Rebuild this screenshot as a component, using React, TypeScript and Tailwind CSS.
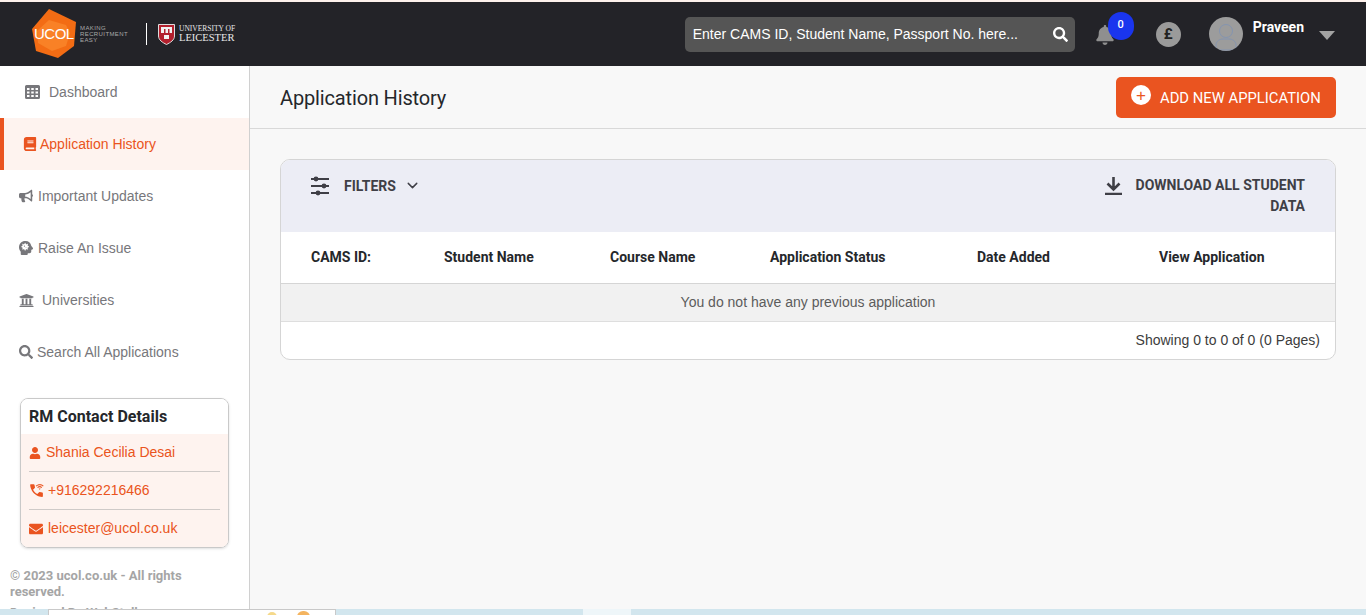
import { ChevronDown } from 'lucide-react';
import { FaBell, FaBook, FaBullhorn, FaEnvelope, FaSearch, FaUniversity, FaUser } from 'react-icons/fa';
import { FaHeadSideVirus } from 'react-icons/fa6';
import { MdWifiCalling3 } from 'react-icons/md';

const arial = "font-['Liberation_Sans',Arial,sans-serif]";
const roboto = "font-['Roboto',sans-serif]";

function Logo() {
  return (
    <div className="flex items-center">
      <div className="relative ml-[32px] h-[50px] w-[44px]">
        <svg className="absolute inset-0" width="44" height="50" viewBox="0 0 44 50">
          <polygon points="17,0 44,13 42,37 26,49 4,42 0,20" fill="#f36c14" />
          <polygon points="17,11 34,16 38,24 34,37 20,42 6,34 5,22" fill="#fb8a2e" opacity="0.7" />
        </svg>
        <span className={`${arial} absolute left-[2px] top-[16px] text-[15px] leading-[18px] tracking-[-0.5px] text-white`}>UCOL</span>
      </div>
      <div className={`${arial} ml-[4px] w-[50px] text-[6px] leading-[6px] tracking-[0.4px] text-[#a9a9a9]`}>
        <div>MAKING</div>
        <div className="whitespace-nowrap">RECRUITMENT</div>
        <div>EASY</div>
      </div>
      <div className="ml-[16px] h-[22px] w-px bg-white" />
      <svg className="ml-[11px]" width="17" height="21" viewBox="0 0 17 21">
        <path d="M0.5 0.5H16.5V12C16.5 16 12.5 18.5 8.5 20.5C4.5 18.5 0.5 16 0.5 12Z" fill="#b3202e" stroke="#ddd" strokeWidth="1" />
        <rect x="3" y="3" width="11" height="6" fill="#f2f2f2" />
        <rect x="6" y="5" width="1.5" height="4" fill="#b3202e" />
        <rect x="10" y="5" width="1.5" height="4" fill="#b3202e" />
        <rect x="6" y="11" width="5" height="4" fill="#f2f2f2" />
      </svg>
      <div className="ml-[4px] font-['Liberation_Serif',serif] text-[#e8e8e8]">
        <div className="whitespace-nowrap text-[7.5px] leading-[8px]">UNIVERSITY OF</div>
        <div className="whitespace-nowrap text-[10.5px] leading-[10px]">LEICESTER</div>
      </div>
    </div>
  );
}

function Header() {
  return (
    <header className="flex h-[64px] items-center bg-[#232328]">
      <Logo />
      <div className={`${arial} ml-auto flex h-[35px] w-[390px] items-center justify-between rounded-[5px] bg-[#555555] pl-[8px] pr-[7px] text-[14px] text-white`}>
        <span>Enter CAMS ID, Student Name, Passport No. here...</span>
        <FaSearch className="text-[15px]" />
      </div>
      <div className="relative ml-[20px] mt-[1px] h-[20px] w-[20px] text-[#8f8f8f]">
        <FaBell className="text-[20px]" />
        <span className={`${roboto} absolute left-[13px] top-[-13px] flex h-[28px] w-[26px] items-center justify-center rounded-full bg-[#1a35ee] text-[11px] font-medium text-white`}>0</span>
      </div>
      <span className={`${roboto} ml-[41px] mt-[1px] flex h-[25px] w-[25px] items-center justify-center rounded-full bg-[#9a9a9a] text-[15px] font-bold text-[#222]`}>£</span>
      <div className="ml-[28px] flex h-[34px] w-[34px] items-end justify-center overflow-hidden rounded-full bg-[#9c9c9c]">
        <svg width="26" height="30" viewBox="0 0 26 30" fill="none" stroke="#8494b0" strokeWidth="1">
          <circle cx="13" cy="10" r="6.5" />
          <path d="M3 29V24C3 20 7 18 10 18H16C19 18 23 20 23 24V29Z" />
        </svg>
      </div>
      <span className={`${roboto} ml-[10px] mb-[14px] text-[14px] font-bold text-white`}>Praveen</span>
      <span className="ml-[15px] mr-[31px] mt-[2px] h-0 w-0 border-x-[8px] border-t-[9px] border-x-transparent border-t-[#a3a3a3]" />
    </header>
  );
}

function GridIcon() {
  return (
    <svg width="15" height="14" viewBox="0 0 15 14" fill="#77777b">
      <path d="M1.5 0H13.5A1.5 1.5 0 0 1 15 1.5V12.5A1.5 1.5 0 0 1 13.5 14H1.5A1.5 1.5 0 0 1 0 12.5V1.5A1.5 1.5 0 0 1 1.5 0Z" />
      <g fill="#ffffff">
        <rect x="2" y="3" width="2.5" height="2" />
        <rect x="6.25" y="3" width="2.5" height="2" />
        <rect x="10.5" y="3" width="2.5" height="2" />
        <rect x="2" y="6.5" width="2.5" height="2" />
        <rect x="6.25" y="6.5" width="2.5" height="2" />
        <rect x="10.5" y="6.5" width="2.5" height="2" />
        <rect x="2" y="10" width="2.5" height="2" />
        <rect x="6.25" y="10" width="2.5" height="2" />
        <rect x="10.5" y="10" width="2.5" height="2" />
      </g>
    </svg>
  );
}

const navItems = [
  { label: 'Dashboard', icon: <GridIcon />, pad: 'pl-[25px]', gap: 'gap-[9px]' },
  { label: 'Application History', icon: <FaBook className="text-[14px]" />, pad: 'pl-[23px]', gap: 'gap-[3px]', active: true },
  { label: 'Important Updates', icon: <FaBullhorn className="text-[14px]" />, pad: 'pl-[19px]', gap: 'gap-[5px]' },
  { label: 'Raise An Issue', icon: <FaHeadSideVirus className="text-[14px]" />, pad: 'pl-[19px]', gap: 'gap-[5px]' },
  { label: 'Universities', icon: <FaUniversity className="text-[15px]" />, pad: 'pl-[19px]', gap: 'gap-[8px]' },
  { label: 'Search All Applications', icon: <FaSearch className="text-[14px]" />, pad: 'pl-[19px]', gap: 'gap-[4px]' },
];

function Sidebar() {
  return (
    <aside className="flex w-[250px] shrink-0 flex-col overflow-hidden border-r border-[#d0d0d0] bg-white">
      <nav className={`${arial} shrink-0 text-[14px]`}>
        {navItems.map((item) => (
          <div
            key={item.label}
            className={
              item.active
                ? `flex h-[52px] items-center ${item.gap} border-l-4 border-[#ea5420] bg-[#fef3ef] pl-[19px] text-[#ea5420]`
                : `flex h-[52px] items-center ${item.gap} ${item.pad} text-[#77777b]`
            }
          >
            {item.icon}
            <span>{item.label}</span>
          </div>
        ))}
      </nav>
      <div className="ml-[20px] mt-[20px] h-[150px] w-[209px] shrink-0 overflow-hidden rounded-[8px] border border-[#c9c9c9] shadow-sm">
        <h2 className={`${roboto} flex h-[35px] items-center bg-white pl-[8px] text-[16px] font-bold text-[#25272b]`}>RM Contact Details</h2>
        <div className={`${arial} h-[114px] bg-[#fef3ef] px-[8px] text-[14px] text-[#ea5420]`}>
          <div className="flex h-[38px] items-center gap-[5px] border-b border-[#cfcac8]">
            <FaUser className="text-[12px]" />
            <span>Shania Cecilia Desai</span>
          </div>
          <div className="flex h-[38px] items-center gap-[3px] border-b border-[#cfcac8]">
            <MdWifiCalling3 className="-ml-[1px] text-[17px]" />
            <span>+916292216466</span>
          </div>
          <div className="flex h-[37px] items-center gap-[5px]">
            <FaEnvelope className="text-[14px]" />
            <span>leicester@ucol.co.uk</span>
          </div>
        </div>
      </div>
      <p className={`${roboto} m-0 mt-[20px] shrink-0 pl-[10px] pr-[30px] text-[13px] font-bold leading-[16px] text-[#a5a5a5]`}>© 2023 ucol.co.uk - All rights reserved.</p>
      <p className={`${roboto} m-0 mt-[5px] shrink-0 whitespace-nowrap pl-[10px] text-[13px] font-bold leading-[16px] text-[#a5a5a5]`}>Designed By WebStella</p>
    </aside>
  );
}

const columns = [
  { label: 'CAMS ID:', cls: 'w-[133px]' },
  { label: 'Student Name', cls: 'w-[166px]' },
  { label: 'Course Name', cls: 'w-[160px]' },
  { label: 'Application Status', cls: 'w-[207px]' },
  { label: 'Date Added', cls: 'w-[182px]' },
  { label: 'View Application', cls: 'w-[120px]' },
];

function HistoryCard() {
  return (
    <section className="overflow-hidden rounded-[10px] border border-[#d5d5d5] bg-white">
      <div className={`${roboto} flex h-[72px] items-start justify-between bg-[#ecedf5] pl-[30px] pr-[30px] pt-[15px] text-[14px] font-bold text-[#3f3f46]`}>
        <div className="flex items-center">
          <svg className="-mt-[1px]" width="18" height="20" viewBox="0 0 18 20" fill="#3f3f46">
            <rect y="2" width="18" height="2" />
            <circle cx="5" cy="3" r="2.4" />
            <rect y="9" width="18" height="2" />
            <circle cx="13" cy="10" r="2.4" />
            <rect y="16" width="18" height="2" />
            <circle cx="7" cy="17" r="2.4" />
          </svg>
          <span className="ml-[15px] mt-[1px]">FILTERS</span>
          <ChevronDown className="ml-[8px] -mt-[1px]" size={17} strokeWidth={2} />
        </div>
        <div className="flex items-start">
          <svg className="mr-[13px] mt-[2px]" width="17" height="18" viewBox="0 0 17 18" fill="none" stroke="#3f3f46" strokeWidth="2.6">
            <path d="M8.5 0V12M2.5 6.5L8.5 12.5L14.5 6.5" />
            <path d="M0 17H17" />
          </svg>
          <div className="w-[170px] text-right leading-[21px]">DOWNLOAD ALL STUDENT DATA</div>
        </div>
      </div>
      <div className={`${roboto} flex h-[52px] items-center border-b border-[#d5d5d5] pl-[30px] text-[14px] font-bold text-[#25272b]`}>
        {columns.map((col) => (
          <div key={col.label} className={`${col.cls} shrink-0 whitespace-nowrap`}>{col.label}</div>
        ))}
      </div>
      <div className={`${arial} flex h-[38px] items-center justify-center border-b border-[#dedede] bg-[#f1f1f1] text-[14px] text-[#5c5c5c]`}>You do not have any previous application</div>
      <div className={`${arial} flex h-[37px] items-center justify-end pr-[15px] text-[14px] text-[#3c3c3c]`}>Showing 0 to 0 of 0 (0 Pages)</div>
    </section>
  );
}

export default function App() {
  return (
    <div className="relative flex h-[615px] flex-col overflow-hidden border-t-2 border-[#fdf1ec] bg-[#f8f8f8]">
      <Header />
      <div className="flex min-h-0 flex-1">
        <Sidebar />
        <main className="min-w-0 flex-1">
          <div className="flex h-[63px] items-center justify-between border-b border-[#d9d9d9] pl-[30px] pr-[30px]">
            <h1 className={`${roboto} m-0 mt-[2px] text-[20px] font-normal tracking-[-0.15px] text-[#25272b]`}>Application History</h1>
            <button className={`${roboto} flex h-[41px] w-[220px] items-center rounded-[5px] bg-[#ea5420] pl-[15px] text-[14.8px] text-white`}>
              <span className={`${arial} mb-[4px] flex h-[20px] w-[20px] items-center justify-center rounded-full bg-white text-[17px] leading-none text-[#ea5420]`}>+</span>
              <span className="ml-[9px] mt-[3px]">ADD NEW APPLICATION</span>
            </button>
          </div>
          <div className="pl-[30px] pr-[30px] pt-[30px]">
            <HistoryCard />
          </div>
        </main>
      </div>
      {/* strip of the window behind, cut off at the bottom of the capture */}
      <div className="absolute bottom-0 left-0 right-0 h-[6px] bg-[#d2e6ee]">
        <div className="absolute left-[48px] top-0 h-[6px] w-[288px] border-x border-t border-[#c9c9c9] bg-white">
          <span className="absolute left-[218px] top-[2px] h-[6px] w-[10px] rounded-t-full bg-[#f5d98b]" />
          <span className="absolute left-[248px] top-[1px] h-[6px] w-[13px] rounded-t-full bg-[#f4b45f]" />
        </div>
        <div className="absolute left-[583px] top-0 h-[6px] w-[48px] bg-[#eef6f9]" />
      </div>
    </div>
  );
}
